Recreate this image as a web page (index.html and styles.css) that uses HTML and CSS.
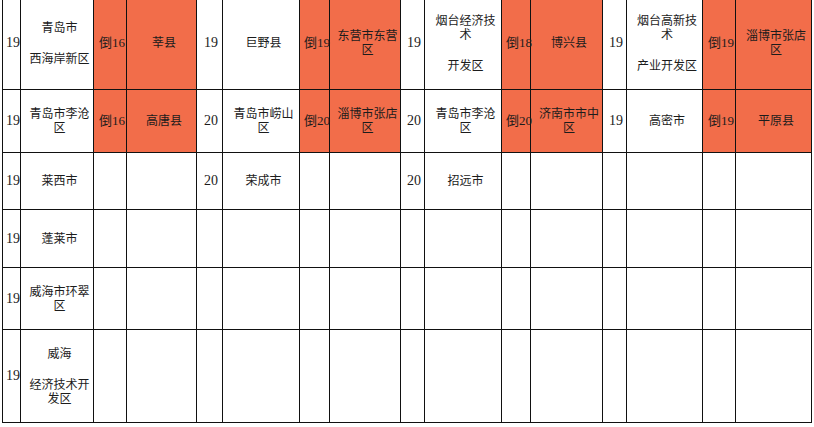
FILE: index.html
```html
<!DOCTYPE html>
<html lang="zh-CN">
<head>
<meta charset="utf-8">
<title>排名表</title>
<link rel="stylesheet" href="styles.css">
</head>
<body>
<table class="rank">
  <colgroup>
    <col class="w18"><col class="w73"><col class="w33"><col class="w70">
    <col class="w26"><col class="w77"><col class="w30"><col class="w71">
    <col class="w24"><col class="w77"><col class="w29"><col class="w72">
    <col class="w24"><col class="w76"><col class="w33"><col class="w76">
  </colgroup>
  <tr class="r1">
    <td class="n">19</td>
    <td><div class="p">青岛市</div><div class="p gap">西海岸新区</div></td>
    <td class="d hot">倒16</td>
    <td class="hot">莘县</td>
    <td class="n">19</td>
    <td>巨野县</td>
    <td class="d hot">倒19</td>
    <td class="hot">东营市东营区</td>
    <td class="n">19</td>
    <td><div class="p">烟台经济技术</div><div class="p gap">开发区</div></td>
    <td class="d hot">倒18</td>
    <td class="hot">博兴县</td>
    <td class="n">19</td>
    <td><div class="p">烟台高新技术</div><div class="p gap">产业开发区</div></td>
    <td class="d hot">倒19</td>
    <td class="hot">淄博市张店区</td>
  </tr>
  <tr class="r2">
    <td class="n">19</td>
    <td>青岛市李沧区</td>
    <td class="d hot">倒16</td>
    <td class="hot">高唐县</td>
    <td class="n">20</td>
    <td>青岛市崂山区</td>
    <td class="d hot">倒20</td>
    <td class="hot">淄博市张店区</td>
    <td class="n">20</td>
    <td>青岛市李沧区</td>
    <td class="d hot">倒20</td>
    <td class="hot">济南市市中区</td>
    <td class="n">19</td>
    <td>高密市</td>
    <td class="d hot">倒19</td>
    <td class="hot">平原县</td>
  </tr>
  <tr class="r3">
    <td class="n">19</td><td>莱西市</td><td></td><td></td>
    <td class="n">20</td><td>荣成市</td><td></td><td></td>
    <td class="n">20</td><td>招远市</td><td></td><td></td>
    <td class="n"></td><td></td><td></td><td></td>
  </tr>
  <tr class="r4">
    <td class="n">19</td><td>蓬莱市</td><td></td><td></td>
    <td class="n"></td><td></td><td></td><td></td>
    <td class="n"></td><td></td><td></td><td></td>
    <td class="n"></td><td></td><td></td><td></td>
  </tr>
  <tr class="r5">
    <td class="n">19</td><td>威海市环翠区</td><td></td><td></td>
    <td class="n"></td><td></td><td></td><td></td>
    <td class="n"></td><td></td><td></td><td></td>
    <td class="n"></td><td></td><td></td><td></td>
  </tr>
  <tr class="r6">
    <td class="n">19</td><td><div class="p">威海</div><div class="p gap">经济技术开发区</div></td><td></td><td></td>
    <td class="n"></td><td></td><td></td><td></td>
    <td class="n"></td><td></td><td></td><td></td>
    <td class="n"></td><td></td><td></td><td></td>
  </tr>
</table>
</body>
</html>
```
FILE: styles.css
```css
html, body {
  margin: 0;
  padding: 0;
  background: #ffffff;
}

.rank {
  border-collapse: collapse;
  table-layout: fixed;
  width: 810px;
  margin: -4px 0 0 2px;
  font-family: "Liberation Serif", "Noto Sans CJK SC", serif;
  font-size: 12px;
  color: #1c1c1c;
}

.rank td {
  border: 1px solid #111111;
  padding: 0 1px 0 6px;
  text-align: center;
  vertical-align: middle;
  line-height: 14px;
}

.rank td.n {
  font-size: 14px;
  padding: 0 0 0 3px;
}

.rank td.d {
  font-size: 13px;
  white-space: nowrap;
  padding: 0 0 0 4px;
  overflow: visible;
}

.rank td.hot {
  background: #f26d4a;
}

.p.gap {
  margin-top: 17px;
}

.r1 { height: 93px; }
.r2 { height: 63px; }
.r3 { height: 57px; }
.r4 { height: 58px; }
.r5 { height: 62px; }
.r6 { height: 93px; }

.w18 { width: 18px; }
.w24 { width: 24px; }
.w26 { width: 26px; }
.w29 { width: 29px; }
.w30 { width: 30px; }
.w33 { width: 33px; }
.w70 { width: 70px; }
.w71 { width: 71px; }
.w72 { width: 72px; }
.w73 { width: 73px; }
.w76 { width: 76px; }
.w77 { width: 77px; }
```
